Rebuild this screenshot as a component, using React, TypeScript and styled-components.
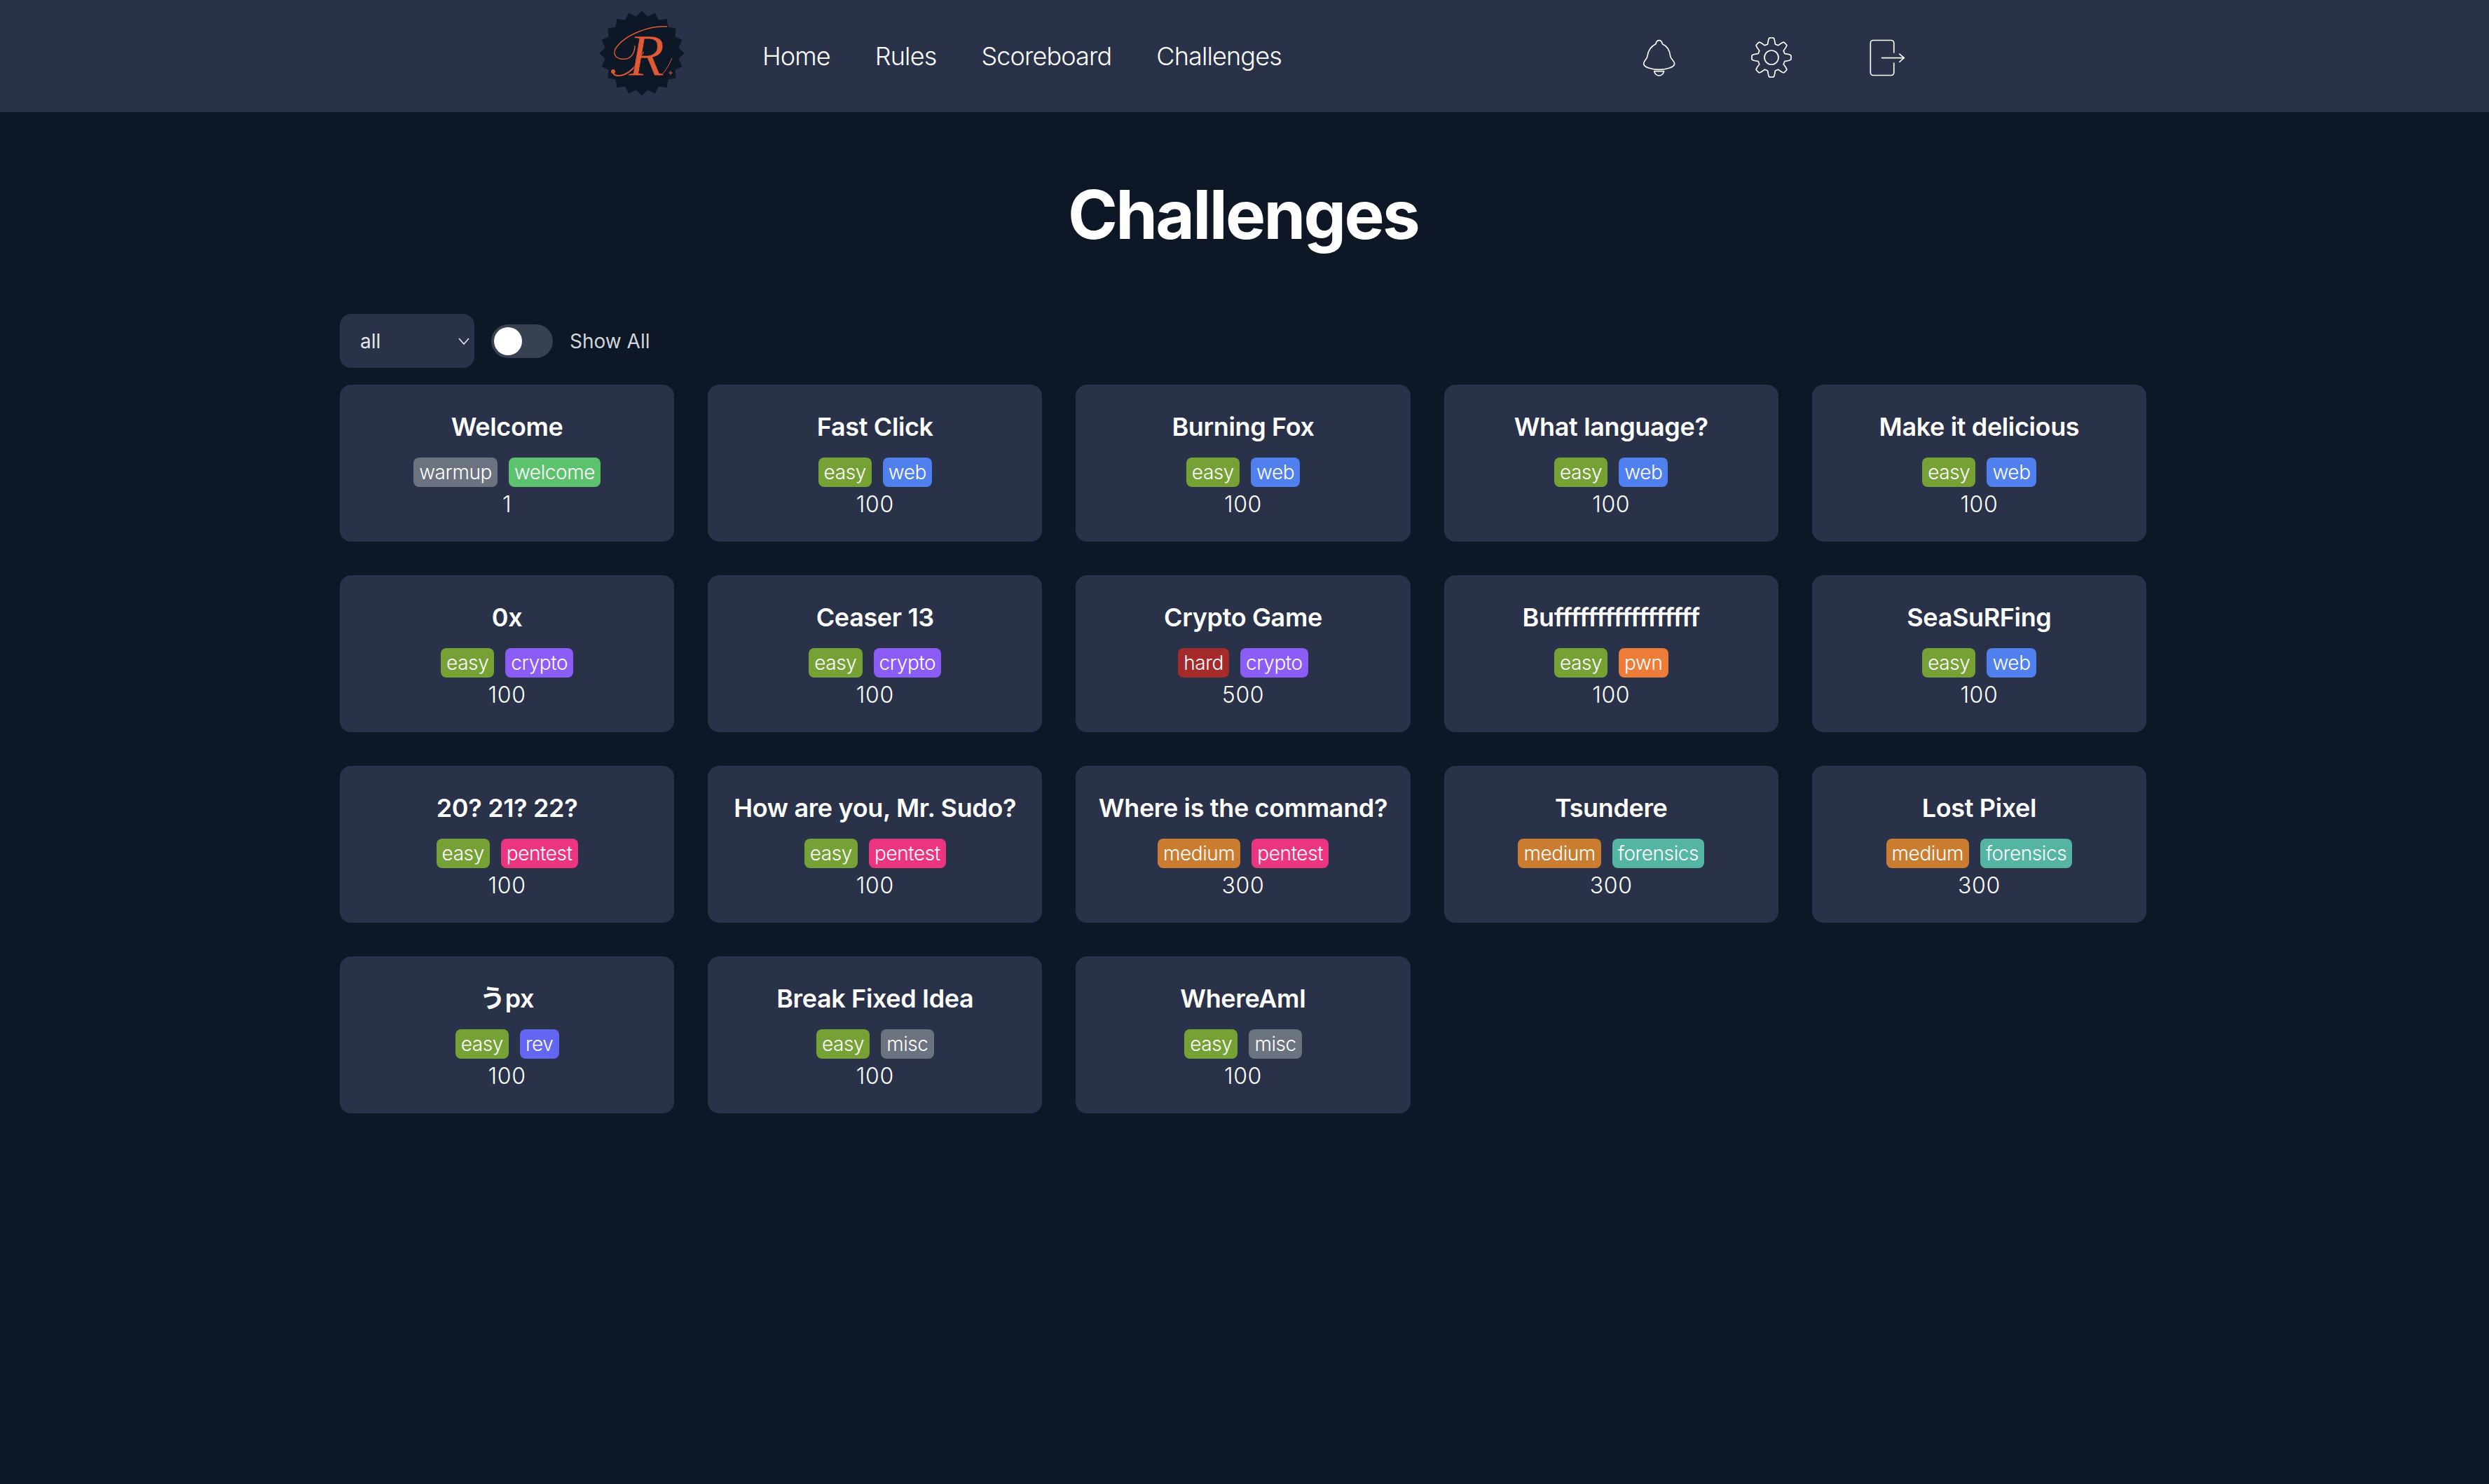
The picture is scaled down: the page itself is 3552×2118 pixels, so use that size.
import React from 'react';
import styled, { createGlobalStyle } from 'styled-components';

const GlobalStyle = createGlobalStyle`
  html, body {
    margin: 0;
    padding: 0;
    background: #0d1726;
    color: #fff;
    font-family: Inter, "Noto Sans CJK JP", sans-serif;
  }
  * { box-sizing: border-box; }
`;

const tagColors: Record<string, string> = {
  warmup: '#6b7280',
  welcome: '#5cc26d',
  easy: '#76a135',
  medium: '#ca7c30',
  hard: '#a52a2a',
  web: '#4f80ee',
  crypto: '#8b5cf6',
  pwn: '#ec7c38',
  pentest: '#ec3581',
  forensics: '#54b5a2',
  rev: '#6366f1',
  misc: '#6b7280',
};

const challenges = [
  { name: 'Welcome', tags: ['warmup', 'welcome'], points: 1 },
  { name: 'Fast Click', tags: ['easy', 'web'], points: 100 },
  { name: 'Burning Fox', tags: ['easy', 'web'], points: 100 },
  { name: 'What language?', tags: ['easy', 'web'], points: 100 },
  { name: 'Make it delicious', tags: ['easy', 'web'], points: 100 },
  { name: '0x', tags: ['easy', 'crypto'], points: 100 },
  { name: 'Ceaser 13', tags: ['easy', 'crypto'], points: 100 },
  { name: 'Crypto Game', tags: ['hard', 'crypto'], points: 500 },
  { name: 'Bu' + 'f'.repeat(17), tags: ['easy', 'pwn'], points: 100 },
  { name: 'SeaSuRFing', tags: ['easy', 'web'], points: 100 },
  { name: '20? 21? 22?', tags: ['easy', 'pentest'], points: 100 },
  { name: 'How are you, Mr. Sudo?', tags: ['easy', 'pentest'], points: 100 },
  { name: 'Where is the command?', tags: ['medium', 'pentest'], points: 300 },
  { name: 'Tsundere', tags: ['medium', 'forensics'], points: 300 },
  { name: 'Lost Pixel', tags: ['medium', 'forensics'], points: 300 },
  { name: 'うpx', tags: ['easy', 'rev'], points: 100 },
  { name: 'Break Fixed Idea', tags: ['easy', 'misc'], points: 100 },
  { name: 'WhereAmI', tags: ['easy', 'misc'], points: 100 },
];

const Nav = styled.nav`
  height: 160px;
  background: #293249;
  display: flex;
  align-items: center;
  padding-left: 840px;
`;

const LogoMark = styled.svg`
  width: 160px;
  height: 150px;
  margin: -10px 88px 0 0;
  flex: none;
`;

const NavLinks = styled.div`
  display: flex;
  gap: 64px;
  width: 1255px;
`;

const NavLink = styled.a`
  font-size: 36px;
  line-height: 56px;
  letter-spacing: -0.024em;
  font-weight: 300;
  color: #fff;
`;

const NavIcons = styled.div`
  display: flex;
  align-items: center;
  gap: 105px;
  margin-top: 4px;
`;

const NavIcon = styled.svg<{ $offset?: number }>`
  flex: none;
  margin-left: ${p => p.$offset ?? 0}px;
  fill: none;
  stroke: #fff;
  stroke-linejoin: round;
  stroke-linecap: round;
`;

const Main = styled.main`
  width: 2578px;
  margin-left: 485px;
`;

const Title = styled.h1`
  margin: 0;
  padding-top: 88px;
  height: 288px;
  text-align: center;
  font-size: 96px;
  line-height: 116px;
  font-weight: 700;
  letter-spacing: -0.028em;
`;

const Filters = styled.div`
  display: flex;
  align-items: center;
  height: 77px;
  margin-bottom: 24px;
`;

const FilterSelect = styled.div`
  width: 192px;
  height: 77px;
  background: #293249;
  border-radius: 16px;
  display: flex;
  align-items: center;
  justify-content: space-between;
  padding: 0 5px 0 29px;
  font-size: 28px;
  color: #e5e7eb;
`;

const Toggle = styled.div`
  width: 88px;
  height: 48px;
  margin-left: 24px;
  border-radius: 24px;
  background: #374151;
  padding: 4px;
`;

const Knob = styled.div`
  width: 40px;
  height: 40px;
  border-radius: 50%;
  background: #fff;
`;

const ToggleLabel = styled.span`
  margin-left: 24px;
  font-size: 28px;
  color: #d1d5db;
`;

const Grid = styled.div`
  display: grid;
  grid-template-columns: repeat(5, 1fr);
  gap: 48px;
`;

const Card = styled.div`
  height: 224px;
  border-radius: 16px;
  background: #293249;
  padding-top: 32px;
  text-align: center;
`;

const CardTitle = styled.div`
  font-size: 36px;
  line-height: 56px;
  font-weight: 600;
  letter-spacing: -0.01em;
  margin-bottom: 16px;
`;

const TagRow = styled.div`
  display: flex;
  justify-content: center;
  gap: 16px;
`;

const Tag = styled.span<{ $bg: string }>`
  height: 42px;
  padding: 0 8px;
  border-radius: 8px;
  background: ${p => p.$bg};
  font-size: 28px;
  line-height: 42px;
  letter-spacing: -0.015em;
  font-weight: 300;
  color: #fff;
`;

const Points = styled.div`
  font-size: 32px;
  line-height: 48px;
  margin-top: 1px;
  letter-spacing: 0.02em;
  font-weight: 300;
`;

// scalloped badge behind the logo letter
const badgePoints = Array.from({ length: 40 }, (_, i) => {
  const r = i % 2 === 0 ? 60.5 : 53;
  const a = (i * Math.PI) / 20 - Math.PI / 2;
  return `${(76 + r * Math.cos(a)).toFixed(1)},${(76 + r * Math.sin(a)).toFixed(1)}`;
}).join(' ');

// eight toothed gear outline, sampled in polar coordinates
const gearPath =
  Array.from({ length: 240 }, (_, i) => {
    const a = (i * Math.PI * 2) / 240;
    const r = 23.8 + 4.2 * Math.max(-1, Math.min(1, 1.7 * Math.cos(8 * a)));
    return `${i === 0 ? 'M' : 'L'}${(30 + r * Math.cos(a)).toFixed(2)} ${(30 + r * Math.sin(a)).toFixed(2)}`;
  }).join(' ') + ' Z';

const Logo = () => (
  <LogoMark viewBox="0 0 160 150">
    <polygon points={badgePoints} fill="#0d1726" />
    <path
      d="M112 38C90 36 52 48 38 70C34 80 42 86 54 84C62 82 66 74 66 65"
      fill="none"
      stroke="#e05a36"
      strokeWidth="1.4"
    />
    <path d="M78 74C70 92 58 108 42 108C36 108 34 104 35 101" fill="none" stroke="#e05a36" strokeWidth="2" />
    <circle cx="35" cy="102" r="3" fill="#e05a36" />
    <path d="M100 108C108 106 114 94 119 83" fill="none" stroke="#e05a36" strokeWidth="1" />
    <path d="M114 104h6M117 101v6" fill="none" stroke="#e05a36" strokeWidth="1" />
    <text
      x="57"
      y="108"
      fontFamily="'Liberation Serif', serif"
      fontStyle="italic"
      fontSize="84"
      fill="#e05a36"
      stroke="#0d1726"
      strokeWidth="0.7"
    >
      R
    </text>
  </LogoMark>
);

const App = () => {
  return (
    <>
      <GlobalStyle />
      <Nav>
        <Logo />
        <NavLinks>
          <NavLink>Home</NavLink>
          <NavLink>Rules</NavLink>
          <NavLink>Scoreboard</NavLink>
          <NavLink>Challenges</NavLink>
        </NavLinks>
        <NavIcons>
          <NavIcon width="50" height="55" viewBox="130 105 150 165" strokeWidth="5">
            <path d="M190 128C194 108 214 108 218 128C240 138 250 160 252 180C254 195 270 200 270 212C270 228 235 238 204 238C173 238 138 228 138 212C138 200 152 195 154 180C156 160 168 138 190 128Z" />
            <path d="M183 245H225C222 258 212 264 204 264C196 264 186 258 183 245Z" />
          </NavIcon>
          <NavIcon width="60" height="60" viewBox="0 0 60 60" strokeWidth="1.7">
            <path d={gearPath} />
            <circle cx="30" cy="30" r="10" />
          </NavIcon>
          <NavIcon $offset={4} width="53" height="55" viewBox="1100 100 160 165" strokeWidth="5">
            <path d="M1208 160V119a12 12 0 0 0-12-12H1119a12 12 0 0 0-12 12V246a12 12 0 0 0 12 12H1196a12 12 0 0 0 12-12V205" />
            <path d="M1156 183H1252M1232 166L1252 183L1232 200" />
          </NavIcon>
        </NavIcons>
      </Nav>
      <Main>
        <Title>Challenges</Title>
        <Filters>
          <FilterSelect>
            all
            <svg width="20" height="20" viewBox="0 0 20 20" fill="none" stroke="#e5e7eb" strokeWidth="1.6">
              <path d="M3 6l7 8 7-8" />
            </svg>
          </FilterSelect>
          <Toggle>
            <Knob />
          </Toggle>
          <ToggleLabel>Show All</ToggleLabel>
        </Filters>
        <Grid>
          {challenges.map(c => (
            <Card key={c.name}>
              <CardTitle>{c.name}</CardTitle>
              <TagRow>
                {c.tags.map(t => (
                  <Tag key={t} $bg={tagColors[t]}>
                    {t}
                  </Tag>
                ))}
              </TagRow>
              <Points>{c.points}</Points>
            </Card>
          ))}
        </Grid>
      </Main>
    </>
  );
};

export default App;
